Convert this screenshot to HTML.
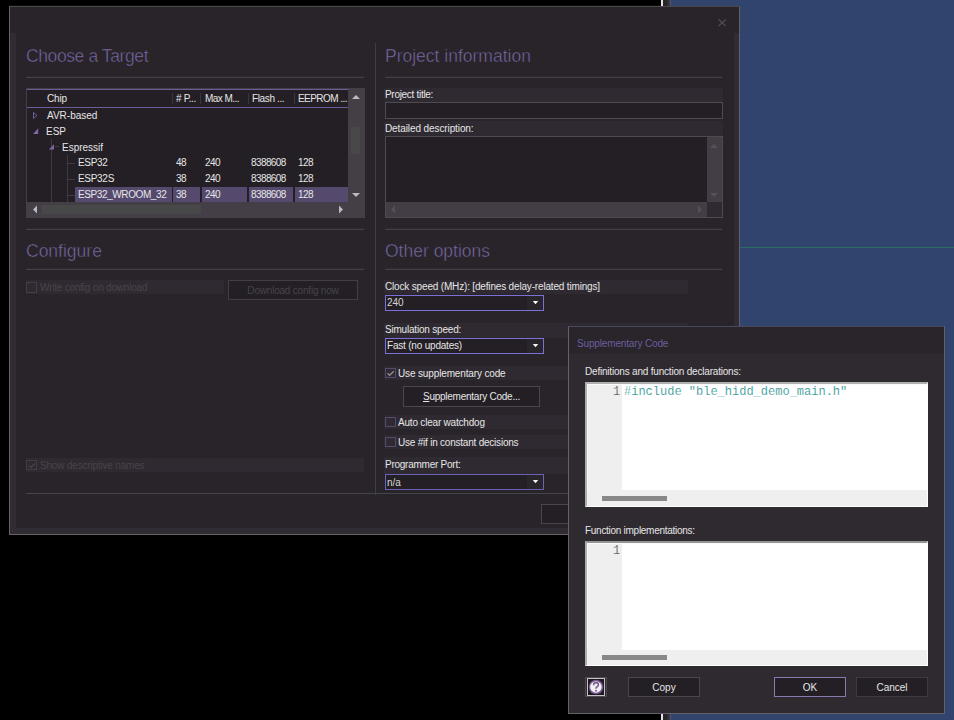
<!DOCTYPE html>
<html><head><meta charset="utf-8">
<style>
*{margin:0;padding:0;box-sizing:border-box}
html,body{width:954px;height:720px;overflow:hidden;background:#000;font-family:"Liberation Sans",sans-serif;font-size:10px;color:#e6e6e6}
.a{position:absolute}
.t{position:absolute;white-space:nowrap;line-height:12px}
.title{position:absolute;white-space:nowrap;font-size:17.5px;line-height:20px;color:#7c6eae;-webkit-text-stroke:0.5px #29242a}
.sep{position:absolute;height:2px;background:#424242;border-top:1px solid #2f2a31}
.panel{position:absolute;background:#2f2a31}
.tb{position:absolute;background:#231f24;border:1px solid #4e4a50}
.cb{position:absolute;width:11px;height:10px;border:1px solid #56496c}
.combo{position:absolute;background:#231f24;border:1px solid #7b6fd8}
.arrow{position:absolute;width:7px;height:4px}
.btn{position:absolute;background:#231f24;border:1px solid #4a4649;text-align:center;white-space:nowrap}
</style></head><body>
<!-- background right side -->
<div class="a" style="left:661px;top:0;width:2px;height:720px;background:#e4e4e4"></div>
<div class="a" style="left:663px;top:0;width:7px;height:720px;background:linear-gradient(90deg,#28252a 0,#28252a 45%,#3c3e3c 100%)"></div>
<div class="a" style="left:670px;top:0;width:1px;height:720px;background:#5c4f76"></div>
<div class="a" style="left:671px;top:0;width:283px;height:720px;background:#30446e"></div>
<div class="a" style="left:671px;top:247px;width:283px;height:1px;background:#2b6c64"></div>

<!-- main dialog -->
<div class="a" style="left:9px;top:6px;width:731px;height:529px;background:#29242a;border:1px solid #646266;border-top-color:#4a474b"></div>
<div class="a" style="left:9px;top:5px;width:652px;height:1px;background:#0e0e0e"></div>
<div class="a" style="left:10px;top:33px;width:6px;height:495px;background:#312c33"></div>
<div class="a" style="left:734px;top:33px;width:5px;height:495px;background:#312c33"></div>
<div class="a" style="left:10px;top:528px;width:729px;height:6px;background:#312c33"></div>
<!-- close X -->
<svg class="a" style="left:716px;top:17px" width="12" height="12"><path d="M2.6 2.6L9.8 9.0M9.8 2.6L2.6 9.0" stroke="#4c4b4c" stroke-width="1.4"/></svg>

<!-- vertical separator -->
<div class="a" style="left:375px;top:43px;width:1px;height:452px;background:#3e3d40"></div>

<!-- Choose a Target -->
<div class="title" style="left:26px;top:46px;letter-spacing:-0.4px">Choose a Target</div>
<div class="sep" style="left:26px;top:76px;width:338px"></div>


<!-- tree -->
<div class="a" style="left:26px;top:88px;width:339px;height:130px;background:#443e46"></div>
<div class="a" style="left:27px;top:89px;width:321px;height:113px;background:#231f24"></div>
<div class="a" style="left:27px;top:89px;width:321px;height:1px;background:#6c5c98"></div>
<div class="a" style="left:27px;top:107px;width:321px;height:1px;background:#6c5c98"></div>
<div class="a" style="left:172px;top:93px;width:1px;height:11px;background:#3a3640"></div>
<div class="a" style="left:200px;top:93px;width:1px;height:11px;background:#3a3640"></div>
<div class="a" style="left:248px;top:93px;width:1px;height:11px;background:#3a3640"></div>
<div class="a" style="left:294px;top:93px;width:1px;height:11px;background:#3a3640"></div>
<div class="t" style="left:47px;top:93px;letter-spacing:-0.2px">Chip</div>
<div class="t" style="left:176px;top:93px;letter-spacing:-0.35px"># P...</div>
<div class="t" style="left:205px;top:93px;letter-spacing:-0.54px">Max M...</div>
<div class="t" style="left:252px;top:93px;letter-spacing:-0.37px">Flash ...</div>
<div class="t" style="left:298px;top:93px;width:50px;overflow:hidden;letter-spacing:-0.55px">EEPROM ...</div>
<!-- v scrollbar -->
<div class="a" style="left:351px;top:127px;width:9px;height:27px;background:#484848"></div>
<svg class="a" style="left:351px;top:94px" width="10" height="6"><path d="M1 5L5 1L9 5Z" fill="#bdbabf"/></svg>
<svg class="a" style="left:351px;top:192px" width="10" height="6"><path d="M1 1L5 5L9 1Z" fill="#bdbabf"/></svg>
<!-- h scrollbar -->
<div class="a" style="left:42px;top:205px;width:159px;height:9px;background:#484848"></div>
<svg class="a" style="left:32px;top:205px" width="6" height="9"><path d="M5 0.5L1 4.5L5 8.5Z" fill="#bdbabf"/></svg>
<svg class="a" style="left:338px;top:205px" width="6" height="9"><path d="M1 0.5L5 4.5L1 8.5Z" fill="#bdbabf"/></svg>
<!-- rows -->
<svg class="a" style="left:32px;top:111px" width="7" height="9"><path d="M1.5 1.5L5 4.5L1.5 7.5Z" fill="none" stroke="#6e5e98" stroke-width="1"/></svg>
<div class="t" style="left:47px;top:110px">AVR-based</div>
<svg class="a" style="left:32px;top:127px" width="7" height="8"><path d="M6.2 1.2L6.2 7L1 7Z" fill="#7a68a8"/></svg>
<div class="t" style="left:46px;top:126px">ESP</div>
<div class="a" style="left:51px;top:139px;width:1px;height:63px;background:#3d3a40"></div>
<svg class="a" style="left:48px;top:143px" width="7" height="8"><path d="M6 1.2L6 6.6L0.8 6.6Z" fill="#7a68a8"/></svg>
<div class="a" style="left:55px;top:146px;width:4px;height:1px;background:#3d3a40"></div>
<div class="t" style="left:62px;top:142px">Espressif</div>
<div class="a" style="left:67px;top:155px;width:1px;height:47px;background:#3d3a40"></div>
<div class="a" style="left:68px;top:163px;width:7px;height:1px;background:#3d3a40"></div>
<div class="a" style="left:68px;top:179px;width:7px;height:1px;background:#3d3a40"></div>
<div class="a" style="left:68px;top:195px;width:7px;height:1px;background:#3d3a40"></div>
<!-- selected row -->
<div class="a" style="left:75px;top:187px;width:97px;height:15px;background:#554a6e"></div>
<div class="a" style="left:173px;top:187px;width:27px;height:15px;background:#554a6e"></div>
<div class="a" style="left:202px;top:187px;width:45px;height:15px;background:#554a6e"></div>
<div class="a" style="left:249px;top:187px;width:44px;height:15px;background:#554a6e"></div>
<div class="a" style="left:295px;top:187px;width:53px;height:15px;background:#554a6e"></div>
<div class="t" style="left:78px;top:157px;letter-spacing:-0.3px">ESP32</div>
<div class="t" style="left:176px;top:157px;letter-spacing:-0.6px">48</div>
<div class="t" style="left:205px;top:157px;letter-spacing:-0.6px">240</div>
<div class="t" style="left:251px;top:157px;letter-spacing:-0.6px">8388608</div>
<div class="t" style="left:298px;top:157px;letter-spacing:-0.6px">128</div>
<div class="t" style="left:78px;top:173px;letter-spacing:-0.3px">ESP32S</div>
<div class="t" style="left:176px;top:173px;letter-spacing:-0.6px">38</div>
<div class="t" style="left:205px;top:173px;letter-spacing:-0.6px">240</div>
<div class="t" style="left:251px;top:173px;letter-spacing:-0.6px">8388608</div>
<div class="t" style="left:298px;top:173px;letter-spacing:-0.6px">128</div>
<div class="t" style="left:78px;top:189px;letter-spacing:-0.4px">ESP32_WROOM_32</div>
<div class="t" style="left:176px;top:189px;letter-spacing:-0.6px">38</div>
<div class="t" style="left:205px;top:189px;letter-spacing:-0.6px">240</div>
<div class="t" style="left:251px;top:189px;letter-spacing:-0.6px">8388608</div>
<div class="t" style="left:298px;top:189px;letter-spacing:-0.6px">128</div>

<!-- Project information -->
<div class="title" style="left:385px;top:46px">Project information</div>
<div class="sep" style="left:385px;top:76px;width:337px"></div>
<div class="panel" style="left:384px;top:88px;width:339px;height:14px"></div>
<div class="t" style="left:385px;top:89px;letter-spacing:-0.3px">Project title:</div>
<div class="tb" style="left:385px;top:102px;width:338px;height:17px"></div>
<div class="panel" style="left:384px;top:121px;width:339px;height:15px"></div>
<div class="t" style="left:385px;top:123px;letter-spacing:-0.1px">Detailed description:</div>
<div class="a" style="left:385px;top:136px;width:338px;height:82px;background:#4e4a50"></div>
<div class="a" style="left:386px;top:137px;width:321px;height:65px;background:#231f24"></div>
<div class="a" style="left:707px;top:137px;width:15px;height:65px;background:#433d45"></div>
<div class="a" style="left:386px;top:202px;width:321px;height:15px;background:#433d45"></div>
<div class="a" style="left:707px;top:202px;width:15px;height:15px;background:#2f2a31"></div>
<svg class="a" style="left:709px;top:143px" width="10" height="6"><path d="M1 5L5 1L9 5Z" fill="#545058"/></svg>
<svg class="a" style="left:709px;top:192px" width="10" height="6"><path d="M1 1L5 5L9 1Z" fill="#545058"/></svg>
<svg class="a" style="left:390px;top:205px" width="6" height="9"><path d="M5 0.5L1 4.5L5 8.5Z" fill="#545058"/></svg>
<svg class="a" style="left:697px;top:205px" width="6" height="9"><path d="M1 0.5L5 4.5L1 8.5Z" fill="#545058"/></svg>
<div class="sep" style="left:385px;top:228px;width:337px"></div>
<div class="sep" style="left:26px;top:228px;width:338px"></div>

<!-- Configure -->
<div class="title" style="left:26px;top:241px">Configure</div>
<div class="sep" style="left:26px;top:268px;width:338px"></div>
<div class="panel" style="left:26px;top:280px;width:198px;height:14px"></div>
<div class="cb" style="left:26px;top:282px;height:11px;border-color:#423e44"></div>
<div class="t" style="left:40px;top:282px;color:#48434a;letter-spacing:-0.2px">Write config on download</div>
<div class="btn" style="left:228px;top:280px;width:130px;height:20px;border-color:#423e44;color:#48434a;line-height:20px;letter-spacing:-0.2px">Download config now</div>
<div class="panel" style="left:26px;top:458px;width:338px;height:14px"></div>
<div class="cb" style="left:26px;top:460px;border-color:#423e44"></div>
<svg class="a" style="left:26px;top:460px" width="11" height="11"><path d="M2.8 5.6L4.8 7.6L8.6 3.6" fill="none" stroke="#4a464c" stroke-width="1.3"/></svg>
<div class="t" style="left:40px;top:460px;color:#48434a;letter-spacing:-0.18px">Show descriptive names</div>

<!-- Other options -->
<div class="title" style="left:385px;top:241px">Other options</div>
<div class="sep" style="left:385px;top:268px;width:337px"></div>
<div class="panel" style="left:384px;top:280px;width:304px;height:14px"></div>
<div class="t" style="left:385px;top:281px;letter-spacing:-0.17px">Clock speed (MHz): [defines delay-related timings]</div>
<div class="combo" style="left:385px;top:295px;width:159px;height:16px"></div>
<div class="a" style="left:527px;top:296px;width:16px;height:14px;background:#29252b"></div>
<svg class="arrow" style="left:532px;top:301px"><path d="M0.8 0H6.2L3.5 3.2Z" fill="#fff"/></svg>
<div class="t" style="left:387px;top:297px;color:#d6d6d6">240</div>

<div class="panel" style="left:384px;top:323px;width:304px;height:15px"></div>
<div class="t" style="left:385px;top:324px;letter-spacing:-0.2px">Simulation speed:</div>
<div class="combo" style="left:385px;top:338px;width:159px;height:16px"></div>
<div class="a" style="left:527px;top:339px;width:16px;height:14px;background:#29252b"></div>
<svg class="arrow" style="left:532px;top:344px"><path d="M0.8 0H6.2L3.5 3.2Z" fill="#fff"/></svg>
<div class="t" style="left:387px;top:340px;letter-spacing:-0.2px">Fast (no updates)</div>

<div class="panel" style="left:384px;top:366px;width:304px;height:14px"></div>
<div class="cb" style="left:385px;top:368px"></div>
<svg class="a" style="left:385px;top:368px" width="11" height="11"><path d="M2.6 5.2L4.6 7.3L8.8 3.2" fill="none" stroke="#8e8c90" stroke-width="1.4"/></svg>
<div class="t" style="left:398px;top:368px;letter-spacing:-0.14px">Use supplementary code</div>
<div class="btn" style="left:403px;top:386px;width:137px;height:21px;line-height:19px"><span style="letter-spacing:-0.25px"><u>S</u>upplementary Code...</span></div>

<div class="panel" style="left:384px;top:415px;width:304px;height:14px"></div>
<div class="cb" style="left:385px;top:417px"></div>
<div class="t" style="left:398px;top:417px;letter-spacing:-0.2px">Auto clear watchdog</div>
<div class="panel" style="left:384px;top:435px;width:304px;height:14px"></div>
<div class="cb" style="left:385px;top:437px"></div>
<div class="t" style="left:398px;top:437px;letter-spacing:-0.22px">Use #if in constant decisions</div>

<div class="panel" style="left:384px;top:457px;width:304px;height:17px"></div>
<div class="t" style="left:385px;top:459px;letter-spacing:-0.25px">Programmer Port:</div>
<div class="combo" style="left:385px;top:474px;width:159px;height:16px;border-color:#6c62b4"></div>
<div class="a" style="left:527px;top:475px;width:16px;height:14px;background:#29252b"></div>
<svg class="arrow" style="left:532px;top:480px"><path d="M0.8 0H6.2L3.5 3.2Z" fill="#fff"/></svg>
<div class="t" style="left:387px;top:477px;color:#d6d6d6">n/a</div>

<div class="a" style="left:26px;top:493px;width:696px;height:1px;background:#454545"></div>
<div class="btn" style="left:541px;top:504px;width:75px;height:20px"></div>

<!-- Supplementary dialog -->
<div class="a" style="left:568px;top:326px;width:377px;height:388px;background:#2f2a30;border:1px solid #646266;border-top-color:#484a5c"></div>
<div class="a" style="left:569px;top:327px;width:375px;height:27px;background:#29252b"></div>
<div class="t" style="left:577px;top:338px;color:#6b5f9c;letter-spacing:-0.15px">Supplementary Code</div>
<div class="t" style="left:585px;top:366px;letter-spacing:-0.2px">Definitions and function declarations:</div>
<!-- editor 1 -->
<div class="a" style="left:585px;top:382px;width:343px;height:125px;background:#efefef;border-top:2px solid #b0b0b0;border-left:2px solid #aeaeae;border-right:1px solid #fff;border-bottom:1px solid #fff"></div>
<div class="a" style="left:587px;top:384px;width:340px;height:1px;background:#fafafa"></div>
<div class="a" style="left:587px;top:384px;width:1px;height:106px;background:#fafafa"></div>
<div class="a" style="left:622px;top:385px;width:305px;height:105px;background:#fff"></div>
<div class="a" style="left:602px;top:496px;width:65px;height:5px;background:#888"></div>
<div class="t" style="left:613px;top:386px;font-family:'Liberation Mono',monospace;font-size:12px;line-height:12px;color:#505050;-webkit-text-stroke:0.2px #efefef">1</div>
<div class="t" style="left:624px;top:386px;font-family:'Liberation Mono',monospace;font-size:12px;line-height:12px;color:#168a8a;-webkit-text-stroke:0.2px #fff">#include "ble_hidd_demo_main.h"</div>
<div class="t" style="left:585px;top:525px;letter-spacing:-0.28px">Function implementations:</div>
<!-- editor 2 -->
<div class="a" style="left:585px;top:541px;width:343px;height:125px;background:#efefef;border-top:2px solid #949494;border-left:2px solid #aeaeae;border-right:1px solid #fff;border-bottom:1px solid #fff"></div>
<div class="a" style="left:587px;top:543px;width:340px;height:1px;background:#fafafa"></div>
<div class="a" style="left:587px;top:543px;width:1px;height:106px;background:#fafafa"></div>
<div class="a" style="left:622px;top:544px;width:305px;height:106px;background:#fff"></div>
<div class="a" style="left:602px;top:655px;width:65px;height:5px;background:#888"></div>
<div class="t" style="left:613px;top:545px;font-family:'Liberation Mono',monospace;font-size:12px;line-height:12px;color:#505050;-webkit-text-stroke:0.2px #efefef">1</div>
<!-- buttons -->
<svg class="a" style="left:585px;top:677px" width="22" height="20">
<rect x="0.5" y="0.5" width="21" height="19" fill="#2f2a30" stroke="#4e4a50"/>
<rect x="2.5" y="1.5" width="17" height="17" fill="#1c181d" stroke="#c4c2c6"/>
<circle cx="11" cy="10" r="7.3" fill="#74588f"/>
<circle cx="10.9" cy="10" r="5.8" fill="#f2eef4"/>
<path d="M8.6 8.2Q8.6 5.6 11 5.6Q13.4 5.6 13.4 7.8Q13.4 9.2 11.8 10Q11 10.5 11 11.8" fill="none" stroke="#7a5e96" stroke-width="1.6"/>
<circle cx="11" cy="13.8" r="1" fill="#7a5e96"/>
</svg>
<div class="btn" style="left:628px;top:677px;width:72px;height:20px;line-height:19px">Copy</div>
<div class="btn" style="left:774px;top:677px;width:72px;height:20px;line-height:19px;border-color:#8a79b0">OK</div>
<div class="btn" style="left:856px;top:677px;width:72px;height:20px;line-height:19px;border-color:#3d3a3e">Cancel</div>
</body></html>
